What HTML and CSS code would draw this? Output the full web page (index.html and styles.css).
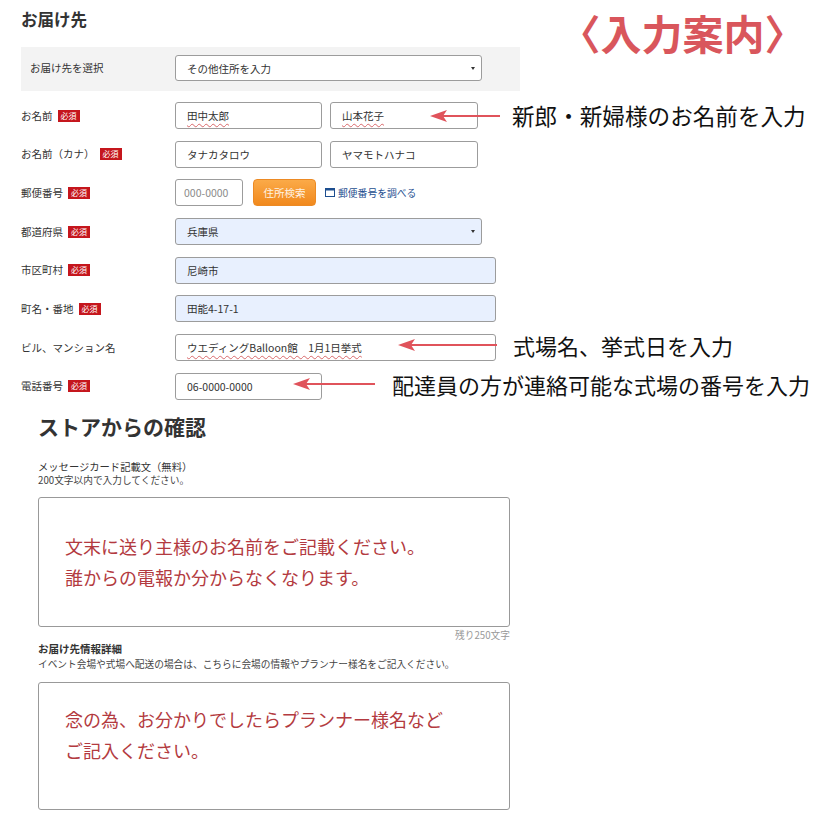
FILE: index.html
```html
<!DOCTYPE html>
<html lang="ja">
<head>
<meta charset="utf-8">
<title>お届け先</title>
<link rel="stylesheet" href="styles.css">
</head>
<body>
<div class="page">
  <header class="top">
    <h1 class="title">お届け先</h1>
    <div class="guide">〈入力案内〉</div>
  </header>

  <div class="band">
    <div class="label band-label">お届け先を選択</div>
    <div class="field select w307 h26">その他住所を入力<span class="caret"></span></div>
  </div>

  <div class="rows">
    <div class="row">
      <div class="label">お名前<span class="req">必須</span></div>
      <div class="field w147"><span class="spell">田中太郎</span></div>
      <div class="field w148 ml8"><span class="spell">山本花子</span></div>
      <div class="note note-1">
        <svg class="arrow" width="70" height="14" viewBox="0 0 70 14"><path d="M0 7 L17 1 L13 7 L17 13 Z" fill="#e0535b"/><line x1="12" y1="7" x2="70" y2="7" stroke="#e0535b" stroke-width="2"/></svg>
        <span class="note-text wide gap12">新郎・新婦様のお名前を入力</span>
      </div>
    </div>

    <div class="row">
      <div class="label">お名前（カナ）<span class="req">必須</span></div>
      <div class="field w147">タナカタロウ</div>
      <div class="field w148 ml8">ヤマモトハナコ</div>
    </div>

    <div class="row">
      <div class="label">郵便番号<span class="req">必須</span></div>
      <div class="field w68 placeholder">000-0000</div>
      <div class="btn">住所検索</div>
      <div class="zip-link">
        <svg width="10" height="9" viewBox="0 0 10 9"><rect x="0.5" y="0.5" width="9" height="8" fill="none" stroke="#1d4e8f"/><rect x="0.5" y="0.5" width="9" height="2" fill="#1d4e8f"/></svg>
        <span>郵便番号を調べる</span>
      </div>
    </div>

    <div class="row">
      <div class="label">都道府県<span class="req">必須</span></div>
      <div class="field select w307 auto">兵庫県<span class="caret"></span></div>
    </div>

    <div class="row">
      <div class="label">市区町村<span class="req">必須</span></div>
      <div class="field w321 auto">尼崎市</div>
    </div>

    <div class="row">
      <div class="label">町名・番地<span class="req">必須</span></div>
      <div class="field w321 auto">田能4-17-1</div>
    </div>

    <div class="row">
      <div class="label">ビル、マンション名</div>
      <div class="field w321"><span class="spell">ウエディングBalloon館　1月1日挙式</span></div>
      <div class="note note-2">
        <svg class="arrow" width="99" height="14" viewBox="0 0 99 14"><path d="M0 7 L17 1 L13 7 L17 13 Z" fill="#e0535b"/><line x1="12" y1="7" x2="99" y2="7" stroke="#e0535b" stroke-width="2"/></svg>
        <span class="note-text gap16">式場名、挙式日を入力</span>
      </div>
    </div>

    <div class="row">
      <div class="label">電話番号<span class="req">必須</span></div>
      <div class="field w147">06-0000-0000</div>
      <div class="note note-3">
        <svg class="arrow" width="82" height="14" viewBox="0 0 82 14"><path d="M0 7 L17 1 L13 7 L17 13 Z" fill="#e0535b"/><line x1="12" y1="7" x2="82" y2="7" stroke="#e0535b" stroke-width="2"/></svg>
        <span class="note-text gap17">配達員の方が連絡可能な式場の番号を入力</span>
      </div>
    </div>
  </div>

  <section class="confirm">
    <h2 class="confirm-title">ストアからの確認</h2>
    <div class="sub-label">メッセージカード記載文（無料）</div>
    <div class="hint">200文字以内で入力してください。</div>
    <div class="textarea ta1">文末に送り主様のお名前をご記載ください。<br>誰からの電報か分からなくなります。</div>
    <div class="remain">残り250文字</div>
    <div class="sub-label bold">お届け先情報詳細</div>
    <div class="hint hint2">イベント会場や式場へ配送の場合は、こちらに会場の情報やプランナー様名をご記入ください。</div>
    <div class="textarea ta2">念の為、お分かりでしたらプランナー様名など<br>ご記入ください。</div>
  </section>
</div>
</body>
</html>
```

FILE: styles.css
```css
* {
  box-sizing: border-box;
  margin: 0;
  padding: 0;
}

body {
  margin: 0;
  background: #fff;
  font-family: "Noto Sans CJK JP", "Noto Sans", sans-serif;
  color: #333;
}

.page {
  width: 815px;
  height: 815px;
  overflow: hidden;
}

/* header */
.top {
  height: 47px;
  display: flex;
  align-items: flex-start;
  padding: 11px 0 0 21px;
}

.title {
  font-size: 16.5px;
  line-height: 17px;
  font-weight: 700;
  color: #333;
}

.guide {
  margin-left: auto;
  margin-right: 30px;
  margin-top: 1px;
  font-size: 41px;
  line-height: 40px;
  font-weight: 700;
  color: #d9565c;
  font-feature-settings: "halt";
  white-space: nowrap;
}

/* grey band */
.band {
  margin-left: 21px;
  width: 499px;
  height: 44px;
  background: #f3f3f3;
  display: flex;
  align-items: center;
  padding-left: 9px;
  padding-bottom: 2px;
}

.label {
  width: 154px;
  flex: none;
  font-size: 10.5px;
  line-height: 14px;
  display: flex;
  align-items: center;
  color: #333;
  white-space: nowrap;
}

.band-label {
  width: 145px;
}

.req {
  background: #c5161d;
  color: #fff;
  font-size: 8px;
  line-height: 12px;
  padding: 0 3px;
  margin-left: 5px;
}

/* rows */
.rows {
  margin-top: 11px;
}

.row {
  position: relative;
  display: flex;
  align-items: center;
  height: 27px;
  margin-bottom: 11.7px;
  padding-left: 21px;
}

.row:last-child {
  margin-bottom: 0;
}

.field {
  flex: none;
  height: 27px;
  border: 1px solid #9c9c9c;
  border-radius: 3px;
  background: #fff;
  font-size: 10.5px;
  display: flex;
  align-items: center;
  padding-left: 11px;
  color: #333;
  white-space: nowrap;
}

.h26 { height: 26px; }
.w68 { width: 68px; }
.w147 { width: 147px; }
.w148 { width: 148px; }
.w307 { width: 307px; }
.w321 { width: 321px; }
.ml8 { margin-left: 8px; }

.auto {
  background: #e8f0fe;
}

.placeholder {
  color: #8a8a8a;
  padding-left: 8px;
}

.caret {
  margin-left: auto;
  margin-right: 6px;
  width: 0;
  height: 0;
  border-left: 2.5px solid transparent;
  border-right: 2.5px solid transparent;
  border-top: 3.5px solid #333;
}

.spell {
  text-decoration: underline wavy #d8696b;
  text-decoration-thickness: 1px;
  text-underline-offset: 3px;
}

.btn {
  flex: none;
  width: 63px;
  height: 27px;
  margin-left: 10px;
  border-radius: 4px;
  border: 1px solid #ec8a24;
  background: linear-gradient(#fbaa48, #f1891d);
  color: #fff3e4;
  font-size: 10.5px;
  display: flex;
  align-items: center;
  justify-content: center;
}

.zip-link {
  display: flex;
  align-items: center;
  gap: 3px;
  margin-left: 9px;
  font-size: 9.8px;
  color: #1d4e8f;
  white-space: nowrap;
}

/* annotations laid over the form */
.note {
  position: absolute;
  top: 50%;
  transform: translateY(-50%);
  display: flex;
  align-items: center;
}

.note-1 { left: 430px; }
.note-2 { left: 398px; top: 40%; }
.note-3 { left: 293px; top: 42%; }

.arrow {
  display: block;
  flex: none;
}

.note-text {
  font-size: 22px;
  line-height: 26px;
  color: #111;
  white-space: nowrap;
}

.note-text.wide {
  font-size: 22.6px;
}

.gap12 { margin-left: 12px; }
.gap16 { margin-left: 16px; }
.gap17 { margin-left: 17px; }

/* confirmation */
.confirm {
  padding-left: 38px;
}

.confirm-title {
  margin-top: 13.5px;
  font-size: 21px;
  line-height: 26px;
  font-weight: 700;
  color: #333;
}

.sub-label {
  margin-top: 20.5px;
  font-size: 10.3px;
  line-height: 14px;
  color: #333;
}

.sub-label.bold {
  margin-top: 0;
  font-weight: 700;
  font-size: 10.5px;
}

.hint {
  font-size: 9.7px;
  line-height: 12px;
  color: #444;
}

.hint2 {
  margin-top: 1.5px;
  line-height: 14px;
}

.textarea {
  width: 472px;
  border: 1px solid #999;
  border-radius: 3px;
  background: #fff;
  font-size: 18px;
  line-height: 31px;
  color: #b33a40;
  padding-left: 26px;
}

.ta1 {
  margin-top: 11px;
  height: 130px;
  padding-top: 33px;
}

.ta2 {
  margin-top: 10.5px;
  height: 128px;
  padding-top: 21.5px;
}

.remain {
  width: 472px;
  margin-top: 1px;
  text-align: right;
  font-size: 9.7px;
  line-height: 14px;
  color: #999;
}
```
